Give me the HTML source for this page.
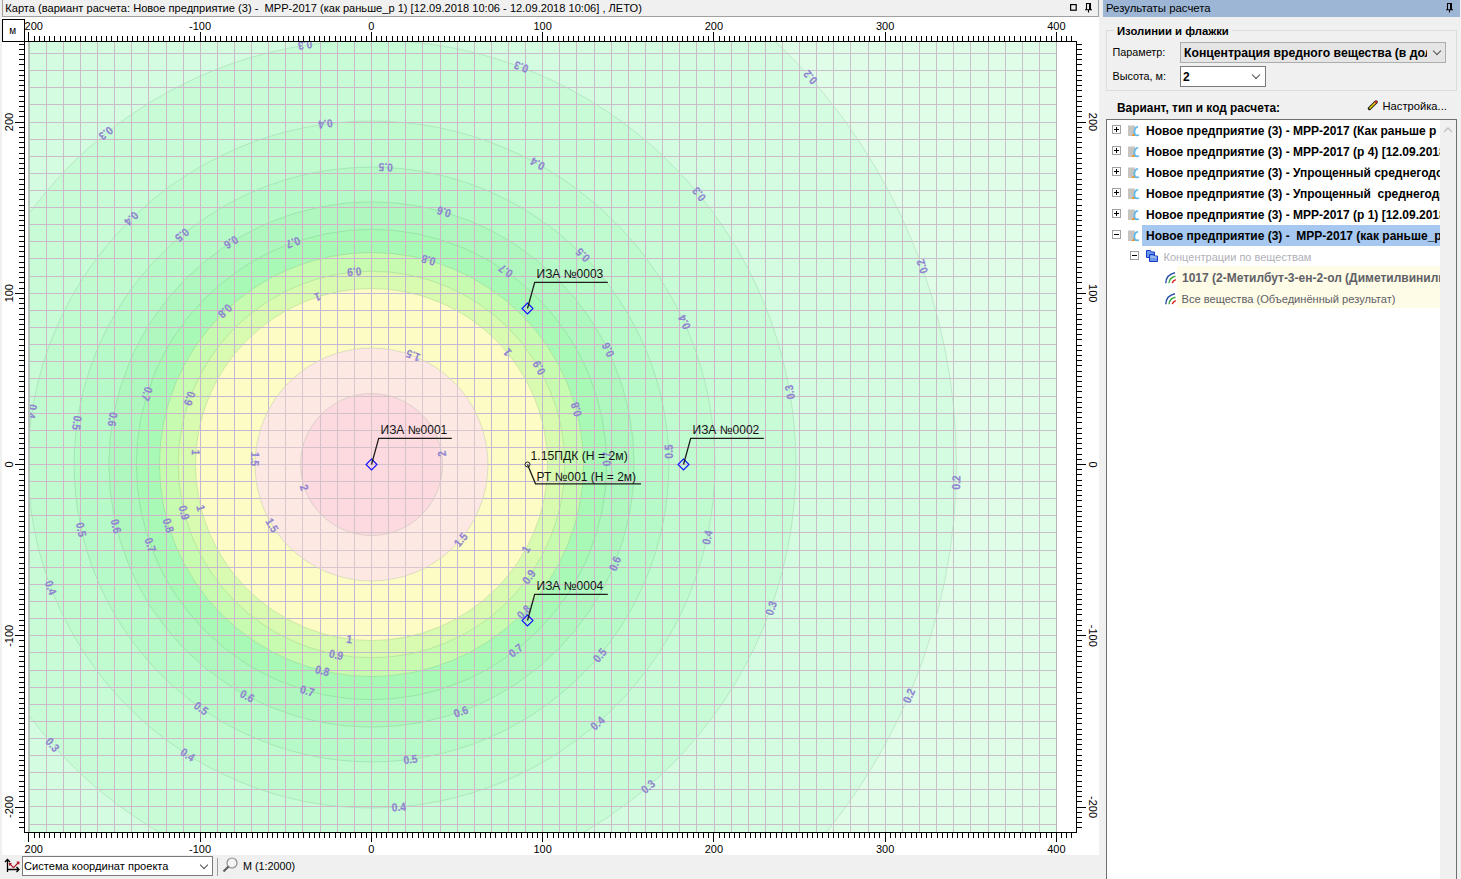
<!DOCTYPE html>
<html><head><meta charset="utf-8"><style>
*{margin:0;padding:0;box-sizing:border-box}
html,body{width:1461px;height:879px;overflow:hidden;background:#f0f0f0;font-family:"Liberation Sans",sans-serif;font-size:11px;color:#000}
.abs{position:absolute}
.tx{position:absolute;white-space:nowrap;line-height:normal}
.cl{font:bold 11.5px "Liberation Sans",sans-serif;fill:#9084d0;stroke:#9084d0;stroke-width:0.15;text-anchor:middle}
.rl{font:11px "Liberation Sans",sans-serif;fill:#000}
.st{font:12px "Liberation Sans",sans-serif;fill:#141414}
.pb{position:relative;display:block;width:9px;height:9px;border:1px solid #a0a0a0;background:#fff}
.pb .h{position:absolute;left:1px;top:3px;width:5px;height:1px;background:#000}
.pb .v{position:absolute;left:3px;top:1px;width:1px;height:5px;background:#000}
.chev{position:absolute;width:6px;height:6px;border-right:1px solid #505050;border-bottom:1px solid #505050;transform:rotate(45deg)}
</style></head><body>
<svg width="1461" height="879" viewBox="0 0 1461 879" style="position:absolute;left:0;top:0">
<rect x="2" y="17" width="1097" height="838" fill="#fff"/>
<defs><clipPath id="mc"><rect x="28" y="42" width="1029" height="790"/></clipPath><clipPath id="lc"><rect x="25" y="17" width="1074" height="838"/></clipPath><clipPath id="b0"><path clip-rule="evenodd" d="M28 42H1057V832H28ZM-213.5 464.5a585 585 0 1 0 1170 0a585 585 0 1 0 -1170 0Z"/></clipPath><clipPath id="b1"><path clip-rule="evenodd" d="M-213.5 464.5a585 585 0 1 0 1170 0a585 585 0 1 0 -1170 0ZM-53.0 464.5a424.5 424.5 0 1 0 849.0 0a424.5 424.5 0 1 0 -849.0 0Z"/></clipPath><clipPath id="b2"><path clip-rule="evenodd" d="M-53.0 464.5a424.5 424.5 0 1 0 849.0 0a424.5 424.5 0 1 0 -849.0 0ZM28.0 464.5a343.5 343.5 0 1 0 687.0 0a343.5 343.5 0 1 0 -687.0 0Z"/></clipPath><clipPath id="b3"><path clip-rule="evenodd" d="M28.0 464.5a343.5 343.5 0 1 0 687.0 0a343.5 343.5 0 1 0 -687.0 0ZM74.10000000000002 464.5a297.4 297.4 0 1 0 594.8 0a297.4 297.4 0 1 0 -594.8 0Z"/></clipPath><clipPath id="b4"><path clip-rule="evenodd" d="M74.10000000000002 464.5a297.4 297.4 0 1 0 594.8 0a297.4 297.4 0 1 0 -594.8 0ZM108.80000000000001 464.5a262.7 262.7 0 1 0 525.4 0a262.7 262.7 0 1 0 -525.4 0Z"/></clipPath><clipPath id="b5"><path clip-rule="evenodd" d="M108.80000000000001 464.5a262.7 262.7 0 1 0 525.4 0a262.7 262.7 0 1 0 -525.4 0ZM136.3 464.5a235.2 235.2 0 1 0 470.4 0a235.2 235.2 0 1 0 -470.4 0Z"/></clipPath><clipPath id="b6"><path clip-rule="evenodd" d="M136.3 464.5a235.2 235.2 0 1 0 470.4 0a235.2 235.2 0 1 0 -470.4 0ZM159.5 464.5a212 212 0 1 0 424 0a212 212 0 1 0 -424 0Z"/></clipPath><clipPath id="b7"><path clip-rule="evenodd" d="M159.5 464.5a212 212 0 1 0 424 0a212 212 0 1 0 -424 0ZM178.2 464.5a193.3 193.3 0 1 0 386.6 0a193.3 193.3 0 1 0 -386.6 0Z"/></clipPath><clipPath id="b8"><path clip-rule="evenodd" d="M178.2 464.5a193.3 193.3 0 1 0 386.6 0a193.3 193.3 0 1 0 -386.6 0ZM195.5 464.5a176 176 0 1 0 352 0a176 176 0 1 0 -352 0Z"/></clipPath><clipPath id="b9"><path clip-rule="evenodd" d="M195.5 464.5a176 176 0 1 0 352 0a176 176 0 1 0 -352 0ZM255.0 464.5a116.5 116.5 0 1 0 233.0 0a116.5 116.5 0 1 0 -233.0 0Z"/></clipPath><clipPath id="b10"><path clip-rule="evenodd" d="M255.0 464.5a116.5 116.5 0 1 0 233.0 0a116.5 116.5 0 1 0 -233.0 0ZM300.5 464.5a71 71 0 1 0 142 0a71 71 0 1 0 -142 0Z"/></clipPath><clipPath id="b11"><path clip-rule="evenodd" d="M300.5 464.5a71 71 0 1 0 142 0a71 71 0 1 0 -142 0Z"/></clipPath></defs><g clip-path="url(#mc)"><rect x="28" y="42" width="1029" height="790" fill="#e0fde8"/><circle cx="371.5" cy="464.5" r="585" fill="#d4fce0"/><circle cx="371.5" cy="464.5" r="424.5" fill="#c8fcd6"/><circle cx="371.5" cy="464.5" r="343.5" fill="#bffbcf"/><circle cx="371.5" cy="464.5" r="297.4" fill="#b6fac7"/><circle cx="371.5" cy="464.5" r="262.7" fill="#aef8bf"/><circle cx="371.5" cy="464.5" r="235.2" fill="#a8f8b6"/><circle cx="371.5" cy="464.5" r="212" fill="#c6fbb0"/><circle cx="371.5" cy="464.5" r="193.3" fill="#d8fbb0"/><circle cx="371.5" cy="464.5" r="176" fill="#fcfcc4"/><circle cx="371.5" cy="464.5" r="116.5" fill="#fde8e4"/><circle cx="371.5" cy="464.5" r="71" fill="#fcdadf"/><circle cx="371.5" cy="464.5" r="585" fill="none" stroke="#408050" stroke-opacity="0.22" stroke-width="0.8"/><circle cx="371.5" cy="464.5" r="424.5" fill="none" stroke="#408050" stroke-opacity="0.22" stroke-width="0.8"/><circle cx="371.5" cy="464.5" r="343.5" fill="none" stroke="#408050" stroke-opacity="0.22" stroke-width="0.8"/><circle cx="371.5" cy="464.5" r="297.4" fill="none" stroke="#408050" stroke-opacity="0.22" stroke-width="0.8"/><circle cx="371.5" cy="464.5" r="262.7" fill="none" stroke="#408050" stroke-opacity="0.22" stroke-width="0.8"/><circle cx="371.5" cy="464.5" r="235.2" fill="none" stroke="#408050" stroke-opacity="0.22" stroke-width="0.8"/><circle cx="371.5" cy="464.5" r="212" fill="none" stroke="#408050" stroke-opacity="0.22" stroke-width="0.8"/><circle cx="371.5" cy="464.5" r="193.3" fill="none" stroke="#408050" stroke-opacity="0.22" stroke-width="0.8"/><circle cx="371.5" cy="464.5" r="176" fill="none" stroke="#408050" stroke-opacity="0.22" stroke-width="0.8"/><circle cx="371.5" cy="464.5" r="116.5" fill="none" stroke="#408050" stroke-opacity="0.22" stroke-width="0.8"/><circle cx="371.5" cy="464.5" r="71" fill="none" stroke="#408050" stroke-opacity="0.22" stroke-width="0.8"/><path id="gp" d="M28.5 42V832M46.5 42V832M63.5 42V832M80.5 42V832M97.5 42V832M114.5 42V832M131.5 42V832M148.5 42V832M166.5 42V832M183.5 42V832M200.5 42V832M217.5 42V832M234.5 42V832M251.5 42V832M268.5 42V832M285.5 42V832M302.5 42V832M320.5 42V832M337.5 42V832M354.5 42V832M371.5 42V832M388.5 42V832M405.5 42V832M422.5 42V832M440.5 42V832M457.5 42V832M474.5 42V832M491.5 42V832M508.5 42V832M525.5 42V832M542.5 42V832M559.5 42V832M576.5 42V832M594.5 42V832M611.5 42V832M628.5 42V832M645.5 42V832M662.5 42V832M679.5 42V832M696.5 42V832M714.5 42V832M731.5 42V832M748.5 42V832M765.5 42V832M782.5 42V832M799.5 42V832M816.5 42V832M833.5 42V832M850.5 42V832M868.5 42V832M885.5 42V832M902.5 42V832M919.5 42V832M936.5 42V832M953.5 42V832M970.5 42V832M988.5 42V832M1005.5 42V832M1022.5 42V832M1039.5 42V832M1056.5 42V832M28 53.5H1057M28 70.5H1057M28 87.5H1057M28 104.5H1057M28 122.5H1057M28 139.5H1057M28 156.5H1057M28 173.5H1057M28 190.5H1057M28 207.5H1057M28 224.5H1057M28 241.5H1057M28 258.5H1057M28 276.5H1057M28 293.5H1057M28 310.5H1057M28 327.5H1057M28 344.5H1057M28 361.5H1057M28 378.5H1057M28 396.5H1057M28 413.5H1057M28 430.5H1057M28 447.5H1057M28 464.5H1057M28 481.5H1057M28 498.5H1057M28 515.5H1057M28 532.5H1057M28 550.5H1057M28 567.5H1057M28 584.5H1057M28 601.5H1057M28 618.5H1057M28 635.5H1057M28 652.5H1057M28 670.5H1057M28 687.5H1057M28 704.5H1057M28 721.5H1057M28 738.5H1057M28 755.5H1057M28 772.5H1057M28 789.5H1057M28 806.5H1057M28 824.5H1057" fill="none" stroke-width="1"/><use href="#gp" clip-path="url(#b0)" stroke="#cac0ca"/><use href="#gp" clip-path="url(#b1)" stroke="#cabcc8"/><use href="#gp" clip-path="url(#b2)" stroke="#ccb8c8"/><use href="#gp" clip-path="url(#b3)" stroke="#ceb8c8"/><use href="#gp" clip-path="url(#b4)" stroke="#ceb8c8"/><use href="#gp" clip-path="url(#b5)" stroke="#ceb6c6"/><use href="#gp" clip-path="url(#b6)" stroke="#ceb6c6"/><use href="#gp" clip-path="url(#b7)" stroke="#c8b8c8"/><use href="#gp" clip-path="url(#b8)" stroke="#c4b8cc"/><use href="#gp" clip-path="url(#b9)" stroke="#c2b8d4"/><use href="#gp" clip-path="url(#b10)" stroke="#d8c8ce"/><use href="#gp" clip-path="url(#b11)" stroke="#d4c2ca"/><text transform="translate(305.0 45.2) rotate(171.0) scale(0.89 1)" class="cl" y="4.1">0.3</text><text transform="translate(521.1 67.2) rotate(-159.4) scale(0.89 1)" class="cl" y="4.1">0.3</text><text transform="translate(810.1 77.3) rotate(-131.4) scale(0.89 1)" class="cl" y="4.1">0.2</text><text transform="translate(325.5 124.1) rotate(172.3) scale(0.89 1)" class="cl" y="4.1">0.4</text><text transform="translate(106.0 133.3) rotate(141.3) scale(0.89 1)" class="cl" y="4.1">0.3</text><text transform="translate(537.5 163.8) rotate(-151.1) scale(0.89 1)" class="cl" y="4.1">0.4</text><text transform="translate(385.8 167.4) rotate(-177.2) scale(0.89 1)" class="cl" y="4.1">0.5</text><text transform="translate(698.9 194.3) rotate(-129.5) scale(0.89 1)" class="cl" y="4.1">0.3</text><text transform="translate(131.5 218.7) rotate(135.7) scale(0.89 1)" class="cl" y="4.1">0.4</text><text transform="translate(443.9 212.0) rotate(-164.0) scale(0.89 1)" class="cl" y="4.1">0.6</text><text transform="translate(182.2 235.1) rotate(140.5) scale(0.89 1)" class="cl" y="4.1">0.5</text><text transform="translate(231.2 242.4) rotate(147.7) scale(0.89 1)" class="cl" y="4.1">0.6</text><text transform="translate(293.2 242.7) rotate(160.6) scale(0.89 1)" class="cl" y="4.1">0.7</text><text transform="translate(428.4 260.3) rotate(-164.4) scale(0.89 1)" class="cl" y="4.1">0.8</text><text transform="translate(582.7 255.1) rotate(-134.8) scale(0.89 1)" class="cl" y="4.1">0.5</text><text transform="translate(354.4 272.0) rotate(174.9) scale(0.89 1)" class="cl" y="4.1">0.9</text><text transform="translate(922.0 266.5) rotate(-109.8) scale(0.89 1)" class="cl" y="4.1">0.2</text><text transform="translate(505.5 271.2) rotate(-145.3) scale(0.89 1)" class="cl" y="4.1">0.7</text><text transform="translate(317.6 297.0) rotate(162.2) scale(0.89 1)" class="cl" y="4.1">1</text><text transform="translate(225.1 311.2) rotate(136.3) scale(0.89 1)" class="cl" y="4.1">0.8</text><text transform="translate(413.1 355.7) rotate(-159.1) scale(0.89 1)" class="cl" y="4.1">1.5</text><text transform="translate(507.3 352.5) rotate(-129.5) scale(0.89 1)" class="cl" y="4.1">1</text><text transform="translate(538.9 367.9) rotate(-120.0) scale(0.89 1)" class="cl" y="4.1">0.9</text><text transform="translate(684.2 322.3) rotate(-114.5) scale(0.89 1)" class="cl" y="4.1">0.4</text><text transform="translate(607.9 349.9) rotate(-115.9) scale(0.89 1)" class="cl" y="4.1">0.6</text><text transform="translate(147.1 393.9) rotate(107.5) scale(0.89 1)" class="cl" y="4.1">0.7</text><text transform="translate(189.8 398.6) rotate(109.9) scale(0.89 1)" class="cl" y="4.1">0.9</text><text transform="translate(789.8 392.2) rotate(-99.8) scale(0.89 1)" class="cl" y="4.1">0.3</text><text transform="translate(576.2 409.4) rotate(-105.1) scale(0.89 1)" class="cl" y="4.1">0.8</text><text transform="translate(32.1 411.5) rotate(98.9) scale(0.89 1)" class="cl" y="4.1">0.4</text><text transform="translate(77.0 422.9) rotate(98.0) scale(0.89 1)" class="cl" y="4.1">0.5</text><text transform="translate(112.7 419.4) rotate(99.9) scale(0.89 1)" class="cl" y="4.1">0.6</text><text transform="translate(195.9 452.3) rotate(94.0) scale(0.89 1)" class="cl" y="4.1">1</text><text transform="translate(255.1 459.1) rotate(92.6) scale(0.89 1)" class="cl" y="4.1">1.5</text><text transform="translate(441.7 453.7) rotate(-98.8) scale(0.89 1)" class="cl" y="4.1">2</text><text transform="translate(606.6 459.1) rotate(-91.3) scale(0.89 1)" class="cl" y="4.1">0.7</text><text transform="translate(668.6 451.6) rotate(-92.5) scale(0.89 1)" class="cl" y="4.1">0.5</text><text transform="translate(956.2 482.5) rotate(-88.2) scale(0.89 1)" class="cl" y="4.1">0.2</text><text transform="translate(304.3 487.5) rotate(71.1) scale(0.89 1)" class="cl" y="4.1">2</text><text transform="translate(201.0 508.1) rotate(75.7) scale(0.89 1)" class="cl" y="4.1">1</text><text transform="translate(184.3 512.6) rotate(75.6) scale(0.89 1)" class="cl" y="4.1">0.9</text><text transform="translate(168.5 525.5) rotate(73.3) scale(0.89 1)" class="cl" y="4.1">0.8</text><text transform="translate(116.2 526.2) rotate(76.4) scale(0.89 1)" class="cl" y="4.1">0.6</text><text transform="translate(81.3 529.6) rotate(77.3) scale(0.89 1)" class="cl" y="4.1">0.5</text><text transform="translate(272.1 525.2) rotate(58.6) scale(0.89 1)" class="cl" y="4.1">1.5</text><text transform="translate(150.5 544.9) rotate(70.0) scale(0.89 1)" class="cl" y="4.1">0.7</text><text transform="translate(460.6 539.6) rotate(-49.9) scale(0.89 1)" class="cl" y="4.1">1.5</text><text transform="translate(707.2 537.4) rotate(-77.7) scale(0.89 1)" class="cl" y="4.1">0.4</text><text transform="translate(525.7 549.3) rotate(-61.2) scale(0.89 1)" class="cl" y="4.1">1</text><text transform="translate(614.8 563.6) rotate(-67.8) scale(0.89 1)" class="cl" y="4.1">0.6</text><text transform="translate(528.8 576.8) rotate(-54.5) scale(0.89 1)" class="cl" y="4.1">0.9</text><text transform="translate(50.8 587.6) rotate(69.0) scale(0.89 1)" class="cl" y="4.1">0.4</text><text transform="translate(771.0 608.1) rotate(-70.2) scale(0.89 1)" class="cl" y="4.1">0.3</text><text transform="translate(523.8 611.9) rotate(-45.9) scale(0.89 1)" class="cl" y="4.1">0.8</text><text transform="translate(599.7 655.2) rotate(-50.1) scale(0.89 1)" class="cl" y="4.1">0.5</text><text transform="translate(515.6 650.4) rotate(-37.8) scale(0.89 1)" class="cl" y="4.1">0.7</text><text transform="translate(349.4 639.1) rotate(7.2) scale(0.89 1)" class="cl" y="4.1">1</text><text transform="translate(336.2 654.6) rotate(10.5) scale(0.89 1)" class="cl" y="4.1">0.9</text><text transform="translate(322.4 670.7) rotate(13.4) scale(0.89 1)" class="cl" y="4.1">0.8</text><text transform="translate(307.3 690.8) rotate(15.8) scale(0.89 1)" class="cl" y="4.1">0.7</text><text transform="translate(247.3 696.0) rotate(28.2) scale(0.89 1)" class="cl" y="4.1">0.6</text><text transform="translate(201.2 708.3) rotate(34.9) scale(0.89 1)" class="cl" y="4.1">0.5</text><text transform="translate(460.9 711.5) rotate(-19.9) scale(0.89 1)" class="cl" y="4.1">0.6</text><text transform="translate(908.8 695.8) rotate(-66.7) scale(0.89 1)" class="cl" y="4.1">0.2</text><text transform="translate(597.4 723.2) rotate(-41.1) scale(0.89 1)" class="cl" y="4.1">0.4</text><text transform="translate(52.6 744.6) rotate(48.7) scale(0.89 1)" class="cl" y="4.1">0.3</text><text transform="translate(187.8 754.7) rotate(32.3) scale(0.89 1)" class="cl" y="4.1">0.4</text><text transform="translate(410.4 759.3) rotate(-7.5) scale(0.89 1)" class="cl" y="4.1">0.5</text><text transform="translate(648.0 786.6) rotate(-40.6) scale(0.89 1)" class="cl" y="4.1">0.3</text><text transform="translate(398.8 806.9) rotate(-4.6) scale(0.89 1)" class="cl" y="4.1">0.4</text></g><rect x="28" y="42" width="2" height="790" fill="#b4c2b8"/><rect x="1056" y="42" width="1" height="790" fill="#b4b4b4"/><g stroke="#000" stroke-width="1" fill="none"><path d="M24 41.5H1077M24.5 41V833M24 832.5H1077M1076.5 41V833"/><path d="M28.5 32V41M28.5 833V842M34.5 36V41M34.5 833V838M39.5 36V41M39.5 833V838M44.5 36V41M44.5 833V838M49.5 36V41M49.5 833V838M54.5 36V41M54.5 833V838M60.5 36V41M60.5 833V838M65.5 36V41M65.5 833V838M70.5 36V41M70.5 833V838M75.5 36V41M75.5 833V838M80.5 36V41M80.5 833V838M85.5 36V41M85.5 833V838M91.5 36V41M91.5 833V838M96.5 36V41M96.5 833V838M101.5 36V41M101.5 833V838M106.5 36V41M106.5 833V838M111.5 36V41M111.5 833V838M117.5 36V41M117.5 833V838M122.5 36V41M122.5 833V838M127.5 36V41M127.5 833V838M132.5 36V41M132.5 833V838M137.5 36V41M137.5 833V838M143.5 36V41M143.5 833V838M148.5 36V41M148.5 833V838M153.5 36V41M153.5 833V838M158.5 36V41M158.5 833V838M163.5 36V41M163.5 833V838M169.5 36V41M169.5 833V838M174.5 36V41M174.5 833V838M179.5 36V41M179.5 833V838M184.5 36V41M184.5 833V838M189.5 36V41M189.5 833V838M194.5 36V41M194.5 833V838M200.5 32V41M200.5 833V842M205.5 36V41M205.5 833V838M210.5 36V41M210.5 833V838M215.5 36V41M215.5 833V838M220.5 36V41M220.5 833V838M226.5 36V41M226.5 833V838M231.5 36V41M231.5 833V838M236.5 36V41M236.5 833V838M241.5 36V41M241.5 833V838M246.5 36V41M246.5 833V838M252.5 36V41M252.5 833V838M257.5 36V41M257.5 833V838M262.5 36V41M262.5 833V838M267.5 36V41M267.5 833V838M272.5 36V41M272.5 833V838M277.5 36V41M277.5 833V838M283.5 36V41M283.5 833V838M288.5 36V41M288.5 833V838M293.5 36V41M293.5 833V838M298.5 36V41M298.5 833V838M303.5 36V41M303.5 833V838M309.5 36V41M309.5 833V838M314.5 36V41M314.5 833V838M319.5 36V41M319.5 833V838M324.5 36V41M324.5 833V838M329.5 36V41M329.5 833V838M335.5 36V41M335.5 833V838M340.5 36V41M340.5 833V838M345.5 36V41M345.5 833V838M350.5 36V41M350.5 833V838M355.5 36V41M355.5 833V838M361.5 36V41M361.5 833V838M366.5 36V41M366.5 833V838M371.5 32V41M371.5 833V842M376.5 36V41M376.5 833V838M381.5 36V41M381.5 833V838M386.5 36V41M386.5 833V838M392.5 36V41M392.5 833V838M397.5 36V41M397.5 833V838M402.5 36V41M402.5 833V838M407.5 36V41M407.5 833V838M412.5 36V41M412.5 833V838M418.5 36V41M418.5 833V838M423.5 36V41M423.5 833V838M428.5 36V41M428.5 833V838M433.5 36V41M433.5 833V838M438.5 36V41M438.5 833V838M444.5 36V41M444.5 833V838M449.5 36V41M449.5 833V838M454.5 36V41M454.5 833V838M459.5 36V41M459.5 833V838M464.5 36V41M464.5 833V838M469.5 36V41M469.5 833V838M475.5 36V41M475.5 833V838M480.5 36V41M480.5 833V838M485.5 36V41M485.5 833V838M490.5 36V41M490.5 833V838M495.5 36V41M495.5 833V838M501.5 36V41M501.5 833V838M506.5 36V41M506.5 833V838M511.5 36V41M511.5 833V838M516.5 36V41M516.5 833V838M521.5 36V41M521.5 833V838M527.5 36V41M527.5 833V838M532.5 36V41M532.5 833V838M537.5 36V41M537.5 833V838M542.5 32V41M542.5 833V842M547.5 36V41M547.5 833V838M553.5 36V41M553.5 833V838M558.5 36V41M558.5 833V838M563.5 36V41M563.5 833V838M568.5 36V41M568.5 833V838M573.5 36V41M573.5 833V838M578.5 36V41M578.5 833V838M584.5 36V41M584.5 833V838M589.5 36V41M589.5 833V838M594.5 36V41M594.5 833V838M599.5 36V41M599.5 833V838M604.5 36V41M604.5 833V838M610.5 36V41M610.5 833V838M615.5 36V41M615.5 833V838M620.5 36V41M620.5 833V838M625.5 36V41M625.5 833V838M630.5 36V41M630.5 833V838M636.5 36V41M636.5 833V838M641.5 36V41M641.5 833V838M646.5 36V41M646.5 833V838M651.5 36V41M651.5 833V838M656.5 36V41M656.5 833V838M662.5 36V41M662.5 833V838M667.5 36V41M667.5 833V838M672.5 36V41M672.5 833V838M677.5 36V41M677.5 833V838M682.5 36V41M682.5 833V838M687.5 36V41M687.5 833V838M693.5 36V41M693.5 833V838M698.5 36V41M698.5 833V838M703.5 36V41M703.5 833V838M708.5 36V41M708.5 833V838M713.5 32V41M713.5 833V842M719.5 36V41M719.5 833V838M724.5 36V41M724.5 833V838M729.5 36V41M729.5 833V838M734.5 36V41M734.5 833V838M739.5 36V41M739.5 833V838M745.5 36V41M745.5 833V838M750.5 36V41M750.5 833V838M755.5 36V41M755.5 833V838M760.5 36V41M760.5 833V838M765.5 36V41M765.5 833V838M770.5 36V41M770.5 833V838M776.5 36V41M776.5 833V838M781.5 36V41M781.5 833V838M786.5 36V41M786.5 833V838M791.5 36V41M791.5 833V838M796.5 36V41M796.5 833V838M802.5 36V41M802.5 833V838M807.5 36V41M807.5 833V838M812.5 36V41M812.5 833V838M817.5 36V41M817.5 833V838M822.5 36V41M822.5 833V838M828.5 36V41M828.5 833V838M833.5 36V41M833.5 833V838M838.5 36V41M838.5 833V838M843.5 36V41M843.5 833V838M848.5 36V41M848.5 833V838M854.5 36V41M854.5 833V838M859.5 36V41M859.5 833V838M864.5 36V41M864.5 833V838M869.5 36V41M869.5 833V838M874.5 36V41M874.5 833V838M879.5 36V41M879.5 833V838M885.5 32V41M885.5 833V842M890.5 36V41M890.5 833V838M895.5 36V41M895.5 833V838M900.5 36V41M900.5 833V838M905.5 36V41M905.5 833V838M911.5 36V41M911.5 833V838M916.5 36V41M916.5 833V838M921.5 36V41M921.5 833V838M926.5 36V41M926.5 833V838M931.5 36V41M931.5 833V838M937.5 36V41M937.5 833V838M942.5 36V41M942.5 833V838M947.5 36V41M947.5 833V838M952.5 36V41M952.5 833V838M957.5 36V41M957.5 833V838M962.5 36V41M962.5 833V838M968.5 36V41M968.5 833V838M973.5 36V41M973.5 833V838M978.5 36V41M978.5 833V838M983.5 36V41M983.5 833V838M988.5 36V41M988.5 833V838M994.5 36V41M994.5 833V838M999.5 36V41M999.5 833V838M1004.5 36V41M1004.5 833V838M1009.5 36V41M1009.5 833V838M1014.5 36V41M1014.5 833V838M1020.5 36V41M1020.5 833V838M1025.5 36V41M1025.5 833V838M1030.5 36V41M1030.5 833V838M1035.5 36V41M1035.5 833V838M1040.5 36V41M1040.5 833V838M1046.5 36V41M1046.5 833V838M1051.5 36V41M1051.5 833V838M1056.5 32V41M1056.5 833V842M1061.5 36V41M1061.5 833V838M1066.5 36V41M1066.5 833V838M1071.5 36V41M1071.5 833V838M19 827.5H24M1077 827.5H1082M19 822.5H24M1077 822.5H1082M19 817.5H24M1077 817.5H1082M19 812.5H24M1077 812.5H1082M15 807.5H24M1077 807.5H1086M19 801.5H24M1077 801.5H1082M19 796.5H24M1077 796.5H1082M19 791.5H24M1077 791.5H1082M19 786.5H24M1077 786.5H1082M19 781.5H24M1077 781.5H1082M19 775.5H24M1077 775.5H1082M19 770.5H24M1077 770.5H1082M19 765.5H24M1077 765.5H1082M19 760.5H24M1077 760.5H1082M19 755.5H24M1077 755.5H1082M19 749.5H24M1077 749.5H1082M19 744.5H24M1077 744.5H1082M19 739.5H24M1077 739.5H1082M19 734.5H24M1077 734.5H1082M19 729.5H24M1077 729.5H1082M19 723.5H24M1077 723.5H1082M19 718.5H24M1077 718.5H1082M19 713.5H24M1077 713.5H1082M19 708.5H24M1077 708.5H1082M19 703.5H24M1077 703.5H1082M19 698.5H24M1077 698.5H1082M19 692.5H24M1077 692.5H1082M19 687.5H24M1077 687.5H1082M19 682.5H24M1077 682.5H1082M19 677.5H24M1077 677.5H1082M19 672.5H24M1077 672.5H1082M19 666.5H24M1077 666.5H1082M19 661.5H24M1077 661.5H1082M19 656.5H24M1077 656.5H1082M19 651.5H24M1077 651.5H1082M19 646.5H24M1077 646.5H1082M19 640.5H24M1077 640.5H1082M15 635.5H24M1077 635.5H1086M19 630.5H24M1077 630.5H1082M19 625.5H24M1077 625.5H1082M19 620.5H24M1077 620.5H1082M19 614.5H24M1077 614.5H1082M19 609.5H24M1077 609.5H1082M19 604.5H24M1077 604.5H1082M19 599.5H24M1077 599.5H1082M19 594.5H24M1077 594.5H1082M19 589.5H24M1077 589.5H1082M19 583.5H24M1077 583.5H1082M19 578.5H24M1077 578.5H1082M19 573.5H24M1077 573.5H1082M19 568.5H24M1077 568.5H1082M19 563.5H24M1077 563.5H1082M19 557.5H24M1077 557.5H1082M19 552.5H24M1077 552.5H1082M19 547.5H24M1077 547.5H1082M19 542.5H24M1077 542.5H1082M19 537.5H24M1077 537.5H1082M19 531.5H24M1077 531.5H1082M19 526.5H24M1077 526.5H1082M19 521.5H24M1077 521.5H1082M19 516.5H24M1077 516.5H1082M19 511.5H24M1077 511.5H1082M19 506.5H24M1077 506.5H1082M19 500.5H24M1077 500.5H1082M19 495.5H24M1077 495.5H1082M19 490.5H24M1077 490.5H1082M19 485.5H24M1077 485.5H1082M19 480.5H24M1077 480.5H1082M19 474.5H24M1077 474.5H1082M19 469.5H24M1077 469.5H1082M15 464.5H24M1077 464.5H1086M19 459.5H24M1077 459.5H1082M19 454.5H24M1077 454.5H1082M19 448.5H24M1077 448.5H1082M19 443.5H24M1077 443.5H1082M19 438.5H24M1077 438.5H1082M19 433.5H24M1077 433.5H1082M19 428.5H24M1077 428.5H1082M19 422.5H24M1077 422.5H1082M19 417.5H24M1077 417.5H1082M19 412.5H24M1077 412.5H1082M19 407.5H24M1077 407.5H1082M19 402.5H24M1077 402.5H1082M19 397.5H24M1077 397.5H1082M19 391.5H24M1077 391.5H1082M19 386.5H24M1077 386.5H1082M19 381.5H24M1077 381.5H1082M19 376.5H24M1077 376.5H1082M19 371.5H24M1077 371.5H1082M19 365.5H24M1077 365.5H1082M19 360.5H24M1077 360.5H1082M19 355.5H24M1077 355.5H1082M19 350.5H24M1077 350.5H1082M19 345.5H24M1077 345.5H1082M19 339.5H24M1077 339.5H1082M19 334.5H24M1077 334.5H1082M19 329.5H24M1077 329.5H1082M19 324.5H24M1077 324.5H1082M19 319.5H24M1077 319.5H1082M19 314.5H24M1077 314.5H1082M19 308.5H24M1077 308.5H1082M19 303.5H24M1077 303.5H1082M19 298.5H24M1077 298.5H1082M15 293.5H24M1077 293.5H1086M19 288.5H24M1077 288.5H1082M19 282.5H24M1077 282.5H1082M19 277.5H24M1077 277.5H1082M19 272.5H24M1077 272.5H1082M19 267.5H24M1077 267.5H1082M19 262.5H24M1077 262.5H1082M19 256.5H24M1077 256.5H1082M19 251.5H24M1077 251.5H1082M19 246.5H24M1077 246.5H1082M19 241.5H24M1077 241.5H1082M19 236.5H24M1077 236.5H1082M19 230.5H24M1077 230.5H1082M19 225.5H24M1077 225.5H1082M19 220.5H24M1077 220.5H1082M19 215.5H24M1077 215.5H1082M19 210.5H24M1077 210.5H1082M19 205.5H24M1077 205.5H1082M19 199.5H24M1077 199.5H1082M19 194.5H24M1077 194.5H1082M19 189.5H24M1077 189.5H1082M19 184.5H24M1077 184.5H1082M19 179.5H24M1077 179.5H1082M19 173.5H24M1077 173.5H1082M19 168.5H24M1077 168.5H1082M19 163.5H24M1077 163.5H1082M19 158.5H24M1077 158.5H1082M19 153.5H24M1077 153.5H1082M19 147.5H24M1077 147.5H1082M19 142.5H24M1077 142.5H1082M19 137.5H24M1077 137.5H1082M19 132.5H24M1077 132.5H1082M19 127.5H24M1077 127.5H1082M15 122.5H24M1077 122.5H1086M19 116.5H24M1077 116.5H1082M19 111.5H24M1077 111.5H1082M19 106.5H24M1077 106.5H1082M19 101.5H24M1077 101.5H1082M19 96.5H24M1077 96.5H1082M19 90.5H24M1077 90.5H1082M19 85.5H24M1077 85.5H1082M19 80.5H24M1077 80.5H1082M19 75.5H24M1077 75.5H1082M19 70.5H24M1077 70.5H1082M19 64.5H24M1077 64.5H1082M19 59.5H24M1077 59.5H1082M19 54.5H24M1077 54.5H1082M19 49.5H24M1077 49.5H1082M19 44.5H24M1077 44.5H1082"/></g><g class="rl"><text x="200.1" y="30" text-anchor="middle">-100</text><text x="200.1" y="853" text-anchor="middle">-100</text><text x="371.4" y="30" text-anchor="middle">0</text><text x="371.4" y="853" text-anchor="middle">0</text><text x="542.6" y="30" text-anchor="middle">100</text><text x="542.6" y="853" text-anchor="middle">100</text><text x="713.9" y="30" text-anchor="middle">200</text><text x="713.9" y="853" text-anchor="middle">200</text><text x="885.1" y="30" text-anchor="middle">300</text><text x="885.1" y="853" text-anchor="middle">300</text><text x="1056.4" y="30" text-anchor="middle">400</text><text x="1056.4" y="853" text-anchor="middle">400</text><text x="24.6" y="30">200</text><text x="24.6" y="853">200</text><text transform="translate(13 807.0) rotate(-90)" text-anchor="middle">-200</text><text transform="translate(1089 807.0) rotate(90)" text-anchor="middle">-200</text><text transform="translate(13 635.8) rotate(-90)" text-anchor="middle">-100</text><text transform="translate(1089 635.8) rotate(90)" text-anchor="middle">-100</text><text transform="translate(13 464.5) rotate(-90)" text-anchor="middle">0</text><text transform="translate(1089 464.5) rotate(90)" text-anchor="middle">0</text><text transform="translate(13 293.2) rotate(-90)" text-anchor="middle">100</text><text transform="translate(1089 293.2) rotate(90)" text-anchor="middle">100</text><text transform="translate(13 122.0) rotate(-90)" text-anchor="middle">200</text><text transform="translate(1089 122.0) rotate(90)" text-anchor="middle">200</text></g><rect x="2.5" y="19.5" width="22" height="22" fill="#fff" stroke="#000"/><text x="12.8" y="34" text-anchor="middle" style="font:10px Liberation Sans">м</text><path d="M371.5 459.0L377.0 464.5L371.5 470.0L366.0 464.5Z" fill="none" stroke="#1010ff" stroke-width="1.1"/><path d="M371.5 464.5L378.7 438.3H451.8" fill="none" stroke="#1e1e1e" stroke-width="1.3"/><text x="380.5" y="433.9" class="st">ИЗА №0001</text><path d="M683.5 459.0L689.0 464.5L683.5 470.0L678.0 464.5Z" fill="none" stroke="#1010ff" stroke-width="1.1"/><path d="M683.5 464.5L690.7 438.3H763.8" fill="none" stroke="#1e1e1e" stroke-width="1.3"/><text x="692.5" y="433.9" class="st">ИЗА №0002</text><path d="M527.5 303.0L533.0 308.5L527.5 314.0L522.0 308.5Z" fill="none" stroke="#1010ff" stroke-width="1.1"/><path d="M527.5 308.5L534.7 282.3H607.8" fill="none" stroke="#1e1e1e" stroke-width="1.3"/><text x="536.5" y="277.9" class="st">ИЗА №0003</text><path d="M527.5 615.0L533.0 620.5L527.5 626.0L522.0 620.5Z" fill="none" stroke="#1010ff" stroke-width="1.1"/><path d="M527.5 620.5L534.7 594.3H607.8" fill="none" stroke="#1e1e1e" stroke-width="1.3"/><text x="536.5" y="589.9" class="st">ИЗА №0004</text><circle cx="527.5" cy="464.5" r="2.5" fill="none" stroke="#222" stroke-width="1"/><path d="M527.5 464.5L535.5 483.8H641" fill="none" stroke="#1e1e1e" stroke-width="1.3"/><text x="530.5" y="460" class="st" style="font-size:12.2px">1.15ПДК (Н = 2м)</text><text x="536.5" y="480.5" class="st">РТ №001 (Н = 2м)</text>
</svg>
<div class="abs" style="left:2px;top:0;width:1097px;height:17px;background:#f0f0f0;border:1px solid #a0a0a0;border-top:none"></div>
<div class="tx" style="left:5.3px;top:1.95px;font-size:11.1px">Карта (вариант расчета: Новое предприятие (3) -&nbsp; МРР-2017 (как раньше_р 1) [12.09.2018 10:06 - 12.09.2018 10:06] , ЛЕТО)</div>
<svg style="position:absolute;left:1067px;top:3px" width="30" height="11" viewBox="0 0 30 11">
<rect x="3.6" y="1.6" width="5.6" height="5.6" fill="none" stroke="#000" stroke-width="1.2"/>
<path d="M19.5 0V6.5M19 0.5H23M18 6.8H25M21.5 7V9.5" stroke="#000" stroke-width="1.1" fill="none"/><rect x="22" y="0" width="2" height="7" fill="#000"/>
</svg>
<div class="abs" style="left:1103px;top:0;width:357px;height:17px;background:#9db6d5"></div>
<div class="tx" style="left:1106px;top:1.68px;font-size:11.4px">Результаты расчета</div>
<svg style="position:absolute;left:1445px;top:3px" width="10" height="11" viewBox="0 0 10 11"><path d="M2.5 0V6.5M2 0.5H6M1 6.8H8M4.5 7V9.5" stroke="#000" stroke-width="1.1" fill="none"/><rect x="5" y="0" width="2" height="7" fill="#000"/></svg>
<div class="abs" style="left:1106px;top:30px;width:351px;height:61px;border:1px solid #dcdcdc"></div>
<div class="abs" style="left:1114px;top:24px;width:118px;height:12px;background:#f0f0f0"></div>
<div class="tx" style="left:1117px;top:24.77px;font-size:11.3px;font-weight:bold">Изолинии и флажки</div>
<div class="tx" style="left:1112.5px;top:46.23px;font-size:10.8px">Параметр:</div>
<div class="abs" style="left:1180px;top:42px;width:266px;height:21px;border:1px solid #adadad;background:#e5e5e5;overflow:hidden">
<div class="tx" style="left:3px;top:2.5px;font-size:12.2px;font-weight:bold;line-height:normal">Концентрация вредного вещества (в долях ПДК)</div>
<div class="abs" style="left:246px;top:0;width:20px;height:19px;background:#e5e5e5"></div>
<div class="chev" style="left:253px;top:5px"></div></div>
<div class="tx" style="left:1112.5px;top:70.23px;font-size:10.8px">Высота, м:</div>
<div class="abs" style="left:1180px;top:66px;width:86px;height:21px;border:1px solid #7a7a7a;background:#fff">
<div class="tx" style="left:2px;top:2.5px;font-size:12px;font-weight:bold">2</div>
<div class="chev" style="left:72px;top:5px"></div></div>
<div class="tx" style="left:1117px;top:101.23px;font-size:11.9px;font-weight:bold">Вариант, тип и код расчета:</div>
<svg style="position:absolute;left:1367px;top:100px" width="11" height="11" viewBox="0 0 11 11"><path d="M9 2L2.5 8.5" stroke="#202020" stroke-width="3.4" stroke-linecap="round"/><path d="M9 2L2.5 8.5" stroke="#f0d000" stroke-width="1.6"/><path d="M8.3 1.3L9.7 2.7" stroke="#e02020" stroke-width="2.2"/></svg>
<div class="tx" style="left:1382.5px;top:99.86px;font-size:11.2px">Настройка...</div>
<div class="abs" style="left:1106px;top:119px;width:351px;height:770px;background:#fff;border:1px solid #707070"></div>
<div class="abs" style="left:1440px;top:120px;width:16px;height:759px;background:#f0f0f0"><svg style="position:absolute;left:3px;top:7px" width="10" height="6" viewBox="0 0 10 6"><path d="M1 5L5 1L9 5" fill="none" stroke="#c0c0c0" stroke-width="1.3"/></svg></div>
<div class="abs" style="left:0;top:0;width:1440px;height:879px;overflow:hidden;clip-path:inset(120px 0 0 1107px)"><div class="abs" style="left:1112px;top:125px"><span class="pb"><i class="h"></i><i class="v"></i></span></div><div class="abs" style="left:1128px;top:125px"><svg width="12" height="12" viewBox="0 0 12 12"><rect x="0" y="0.5" width="7" height="10.5" fill="#c8c4c0"/><path d="M10 1.5C7 2.5 5.5 5 7 9.5C8 10.5 9.5 10.5 11 10" fill="none" stroke="#60b8ec" stroke-width="1.8"/><path d="M3.5 11L5.5 8.5L7 11Z" fill="#f09020"/></svg></div><div class="tx" style="left:1146px;top:124.14px;font-size:12px;font-weight:bold;letter-spacing:0px">Новое предприятие (3) - МРР-2017 (Как раньше р 1) [12.09.2018]</div><div class="abs" style="left:1112px;top:146px"><span class="pb"><i class="h"></i><i class="v"></i></span></div><div class="abs" style="left:1128px;top:146px"><svg width="12" height="12" viewBox="0 0 12 12"><rect x="0" y="0.5" width="7" height="10.5" fill="#c8c4c0"/><path d="M10 1.5C7 2.5 5.5 5 7 9.5C8 10.5 9.5 10.5 11 10" fill="none" stroke="#60b8ec" stroke-width="1.8"/><path d="M3.5 11L5.5 8.5L7 11Z" fill="#f09020"/></svg></div><div class="tx" style="left:1146px;top:145.14px;font-size:12px;font-weight:bold;letter-spacing:0px">Новое предприятие (3) - МРР-2017 (р 4) [12.09.2018 10:06]</div><div class="abs" style="left:1112px;top:167px"><span class="pb"><i class="h"></i><i class="v"></i></span></div><div class="abs" style="left:1128px;top:167px"><svg width="12" height="12" viewBox="0 0 12 12"><rect x="0" y="0.5" width="7" height="10.5" fill="#c8c4c0"/><path d="M10 1.5C7 2.5 5.5 5 7 9.5C8 10.5 9.5 10.5 11 10" fill="none" stroke="#60b8ec" stroke-width="1.8"/><path d="M3.5 11L5.5 8.5L7 11Z" fill="#f09020"/></svg></div><div class="tx" style="left:1146px;top:166.14px;font-size:12px;font-weight:bold;letter-spacing:0px">Новое предприятие (3) - Упрощенный среднегодовой</div><div class="abs" style="left:1112px;top:188px"><span class="pb"><i class="h"></i><i class="v"></i></span></div><div class="abs" style="left:1128px;top:188px"><svg width="12" height="12" viewBox="0 0 12 12"><rect x="0" y="0.5" width="7" height="10.5" fill="#c8c4c0"/><path d="M10 1.5C7 2.5 5.5 5 7 9.5C8 10.5 9.5 10.5 11 10" fill="none" stroke="#60b8ec" stroke-width="1.8"/><path d="M3.5 11L5.5 8.5L7 11Z" fill="#f09020"/></svg></div><div class="tx" style="left:1146px;top:187.14px;font-size:12px;font-weight:bold;letter-spacing:0px">Новое предприятие (3) - Упрощенный&nbsp; среднегодовой</div><div class="abs" style="left:1112px;top:209px"><span class="pb"><i class="h"></i><i class="v"></i></span></div><div class="abs" style="left:1128px;top:209px"><svg width="12" height="12" viewBox="0 0 12 12"><rect x="0" y="0.5" width="7" height="10.5" fill="#c8c4c0"/><path d="M10 1.5C7 2.5 5.5 5 7 9.5C8 10.5 9.5 10.5 11 10" fill="none" stroke="#60b8ec" stroke-width="1.8"/><path d="M3.5 11L5.5 8.5L7 11Z" fill="#f09020"/></svg></div><div class="tx" style="left:1146px;top:208.14px;font-size:12px;font-weight:bold;letter-spacing:0px">Новое предприятие (3) - МРР-2017 (р 1) [12.09.2018 10:06]</div><div class="abs" style="left:1142px;top:225px;width:298px;height:21px;background:#a6c8f0"></div><div class="abs" style="left:1112px;top:230px"><span class="pb"><i class="h"></i></span></div><div class="abs" style="left:1128px;top:230px"><svg width="12" height="12" viewBox="0 0 12 12"><rect x="0" y="0.5" width="7" height="10.5" fill="#c8c4c0"/><path d="M10 1.5C7 2.5 5.5 5 7 9.5C8 10.5 9.5 10.5 11 10" fill="none" stroke="#60b8ec" stroke-width="1.8"/><path d="M3.5 11L5.5 8.5L7 11Z" fill="#f09020"/></svg></div><div class="tx" style="left:1146px;top:229.14px;font-size:12px;font-weight:bold;letter-spacing:0px">Новое предприятие (3) -&nbsp; МРР-2017 (как раньше_р 1)</div><div class="abs" style="left:1130px;top:251px"><span class="pb"><i class="h"></i></span></div><div class="abs" style="left:1146px;top:250px"><svg width="12" height="12" viewBox="0 0 12 12"><path d="M0.5 0.5H4.5L5.5 2H8.5V7.5H0.5Z" fill="#6c98e8" stroke="#1838c8"/><path d="M3.5 4.5H7.5L8.5 6H11.5V11.5H3.5Z" fill="#6c98e8" stroke="#1838c8"/><path d="M4.5 7H10.5" stroke="#c8dcff"/></svg></div><div class="tx" style="left:1163.5px;top:251.04px;font-size:11px;color:#b0b0b8">Концентрации по веществам</div><div class="abs" style="left:1177px;top:266px;width:263px;height:42px;background:#fefbe6"></div><div class="abs" style="left:1165px;top:272px"><svg width="12" height="12" viewBox="0 0 12 12"><path d="M0.8 11.2C1 6 4 2 10 0.8" fill="none" stroke="#2850a8" stroke-width="1.4"/><path d="M4 11.2C4.2 8 6.5 5 10.5 4.2" fill="none" stroke="#40a840" stroke-width="1.4"/><path d="M7.2 11.2C7.6 9.6 8.8 8.2 10.8 7.6" fill="none" stroke="#e01818" stroke-width="1.4"/></svg></div><div class="tx" style="left:1182px;top:271.14px;font-size:12px;font-weight:bold;color:#606068">1017 (2-Метилбут-3-ен-2-ол (Диметилвинилкарбинол))</div><div class="abs" style="left:1165px;top:293px"><svg width="12" height="12" viewBox="0 0 12 12"><path d="M0.8 11.2C1 6 4 2 10 0.8" fill="none" stroke="#2850a8" stroke-width="1.4"/><path d="M4 11.2C4.2 8 6.5 5 10.5 4.2" fill="none" stroke="#40a840" stroke-width="1.4"/><path d="M7.2 11.2C7.6 9.6 8.8 8.2 10.8 7.6" fill="none" stroke="#e01818" stroke-width="1.4"/></svg></div><div class="tx" style="left:1181.5px;top:292.95px;font-size:11.1px;color:#606068">Все вещества (Объединённый результат)</div></div>
<svg style="position:absolute;left:4px;top:858px" width="16" height="15" viewBox="0 0 16 15">
<path d="M3.5 14V1.5M1 4L3.5 1.5L6 4M3 11.5H15M12.5 9L15 11.5L12.5 14" fill="none" stroke="#000" stroke-width="1.3"/>
<path d="M6 6L9.5 9.6L14.5 4.5" fill="none" stroke="#b01020" stroke-width="1.1"/><path d="M4.8 4.8L8 5.2L5.2 8Z M15.6 3.4L15.2 6.8L12.2 3.8Z" fill="#b01020"/>
</svg>
<div class="abs" style="left:22px;top:856px;width:191px;height:20px;background:#fff;border:1px solid #7a7a7a"><div class="chev" style="left:178px;top:5px"></div></div>
<div class="tx" style="left:24px;top:859.95px;font-size:11.1px">Система координат проекта</div>
<div class="abs" style="left:217px;top:858px;width:1px;height:18px;background:#a0a0a0"></div>
<svg style="position:absolute;left:222px;top:857px" width="17" height="16" viewBox="0 0 17 16">
<circle cx="10" cy="6" r="5" fill="#f4f4f4" stroke="#909090" stroke-width="1.2"/>
<path d="M6.5 9.5L1.5 14.5" stroke="#606060" stroke-width="2.2"/></svg>
<div class="tx" style="left:243px;top:859.73px;font-size:10.8px">М (1:2000)</div>
</body></html>
